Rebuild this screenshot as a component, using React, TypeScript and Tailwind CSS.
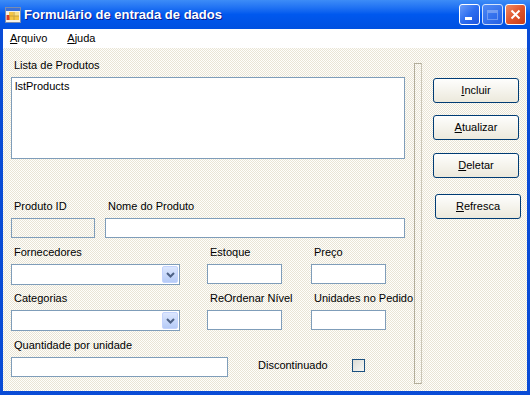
import React from "react";

const font = "font-['Liberation_Sans',Arial,sans-serif]";
const pattern =
  "bg-[repeating-conic-gradient(#e9e4d5_0_25%,#fefefb_0_50%)] bg-[length:2px_2px]";

function Label({ text, className = "" }: { text: string; className?: string }) {
  return (
    <div className={`h-[13px] leading-[13px] pl-[3px] text-[11px] text-black whitespace-nowrap ${className}`}>
      {text}
    </div>
  );
}

function TextBox({ w, disabled = false }: { w: string; disabled?: boolean }) {
  return (
    <div
      className={`${w} h-[20px] mt-[5px] border border-[#7f9db9] ${disabled ? "" : "bg-white"}`}
    />
  );
}

function Combo() {
  return (
    <div className="w-[169px] h-[21px] mt-[5px] border border-[#7f9db9] bg-white flex justify-end p-px">
      <div className="w-[16px] h-full rounded-[2px] bg-gradient-to-b from-[#dce7fe] to-[#b6cbf7] border border-[#c3d3fd] flex items-center justify-center">
        <svg width="9" height="6" viewBox="0 0 9 6">
          <path d="M1 1 L4.5 4.5 L8 1" fill="none" stroke="#4d6185" strokeWidth="2" />
        </svg>
      </div>
    </div>
  );
}

function Field({ label, w }: { label: string; w: string }) {
  return (
    <div className={`${w} flex flex-col`}>
      <Label text={label} />
      <TextBox w={w} />
    </div>
  );
}

function XpButton({ label, className = "" }: { label: string; className?: string }) {
  return (
    <div
      className={`w-[86px] h-[25px] rounded-[3px] border border-[#003c74] bg-gradient-to-b from-[#fefefd] to-[#ece9dc] flex items-center justify-center text-[11px] text-black ${className}`}
    >
      <span>
        <span className="underline">{label[0]}</span>
        {label.slice(1)}
      </span>
    </div>
  );
}

function FormIcon() {
  return (
    <svg width="16" height="16" viewBox="0 0 16 16">
      <rect x="0.5" y="0.5" width="15" height="15" fill="#f6f3e8" stroke="#7a8cae" />
      <rect x="1" y="1" width="14" height="3" fill="#3a6fd8" />
      <rect x="4" y="5" width="10" height="8" fill="#f5c542" />
      <rect x="8" y="5" width="6" height="4" fill="#f7e08a" />
      <rect x="1.5" y="8" width="3" height="5" fill="#d63a2a" />
      <path d="M4 9 H14 M9 5 V13" stroke="#c9a23a" strokeWidth="1" />
    </svg>
  );
}

function TitleButton({ kind }: { kind: "min" | "max" | "close" }) {
  const bg =
    kind === "close"
      ? "bg-gradient-to-br from-[#f08a63] via-[#e0552d] to-[#c83c16]"
      : kind === "max"
        ? "bg-gradient-to-br from-[#5b8ff5] to-[#2c64e6] opacity-80"
        : "bg-gradient-to-br from-[#6a9cf8] via-[#2d6ef0] to-[#1f55de]";
  return (
    <div className={`w-[21px] h-[21px] rounded-[3px] border border-white flex items-center justify-center ${bg}`}>
      {kind === "min" && <div className="w-[7px] h-[3px] bg-white mt-[7px] -ml-[3px]" />}
      {kind === "max" && (
        <div className="w-[11px] h-[10px] border border-[#a9c2f6] border-t-[3px] opacity-70" />
      )}
      {kind === "close" && (
        <svg width="11" height="11" viewBox="0 0 11 11">
          <path d="M1.5 1.5 L9.5 9.5 M9.5 1.5 L1.5 9.5" stroke="white" strokeWidth="2" />
        </svg>
      )}
    </div>
  );
}

export default function App() {
  return (
    <div className={`w-[530px] h-[395px] flex flex-col bg-[#0a4cd6] ${font}`}>
      {/* title bar */}
      <div className="h-[29px] flex items-center bg-gradient-to-b from-[#3d8cf7] via-[#0058ee] to-[#0050e0] shrink-0">
        <div className="ml-[5px] mt-[1px]">
          <FormIcon />
        </div>
        <span className="ml-[3px] text-[13px] font-bold text-white [text-shadow:1px_1px_0_#0a1a8a]">
          Formulário de entrada de dados
        </span>
        <div className="ml-auto mr-[4px] flex gap-[2px]">
          <TitleButton kind="min" />
          <TitleButton kind="max" />
          <TitleButton kind="close" />
        </div>
      </div>

      <div className="flex-1 mx-[3px] mb-[4px] flex flex-col">
        {/* menu */}
        <div className="h-[19px] bg-white flex items-center text-[11px] text-black shrink-0">
          <span className="ml-[7px]">
            <span className="underline">A</span>rquivo
          </span>
          <span className="ml-[20px]">
            <span className="underline">A</span>juda
          </span>
        </div>

        {/* form body */}
        <div className={`flex-1 flex ${pattern}`}>
          <div className="ml-[8px] w-[394px] flex flex-col">
            <Label text="Lista de Produtos" className="mt-[11px]" />
            <div className="mt-[5px] h-[82px] border border-[#7f9db9] bg-white pl-[3px] pt-[2px] text-[11px] leading-[13px]">
              lstProducts
            </div>

            <div className="mt-[41px] flex">
              <div className="w-[84px] flex flex-col">
                <Label text="Produto ID" />
                <TextBox w="w-[84px]" disabled />
              </div>
              <div className="ml-[10px] w-[300px] flex flex-col">
                <Label text="Nome do Produto" />
                <TextBox w="w-[300px]" />
              </div>
            </div>

            <div className="mt-[8px] flex">
              <div className="w-[169px] flex flex-col">
                <Label text="Fornecedores" />
                <Combo />
              </div>
              <div className="ml-[27px]">
                <Field label="Estoque" w="w-[75px]" />
              </div>
              <div className="ml-[29px]">
                <Field label="Preço" w="w-[75px]" />
              </div>
            </div>

            <div className="mt-[7px] flex">
              <div className="w-[169px] flex flex-col">
                <Label text="Categorias" />
                <Combo />
              </div>
              <div className="ml-[27px]">
                <Field label="ReOrdenar Nível" w="w-[75px]" />
              </div>
              <div className="ml-[29px]">
                <Field label="Unidades no Pedido" w="w-[75px]" />
              </div>
            </div>

            <div className="mt-[8px] flex">
              <div className="w-[217px] flex flex-col">
                <Label text="Quantidade por unidade" />
                <TextBox w="w-[217px]" />
              </div>
              <div className="ml-[30px] mt-[18px] h-[20px] flex items-center text-[11px]">
                <span className="w-[94px] -mt-[3px]">Discontinuado</span>
                <div className="w-[13px] h-[13px] -mt-[4px] border border-[#1c5180] bg-gradient-to-br from-[#dcdcd5] to-[#f7f7f4]" />
              </div>
            </div>
          </div>

          {/* separator */}
          <div className="ml-[9px] mt-[15px] w-[8px] h-[321px] border border-[#b3ae9b] border-r-[#c9c5b6]" />

          {/* buttons */}
          <div className="ml-[11px] flex flex-col">
            <XpButton label="Incluir" className="mt-[30px]" />
            <XpButton label="Atualizar" className="mt-[12px]" />
            <XpButton label="Deletar" className="mt-[13px]" />
            <XpButton label="Refresca" className="mt-[16px] ml-[2px]" />
          </div>
        </div>
      </div>
    </div>
  );
}
